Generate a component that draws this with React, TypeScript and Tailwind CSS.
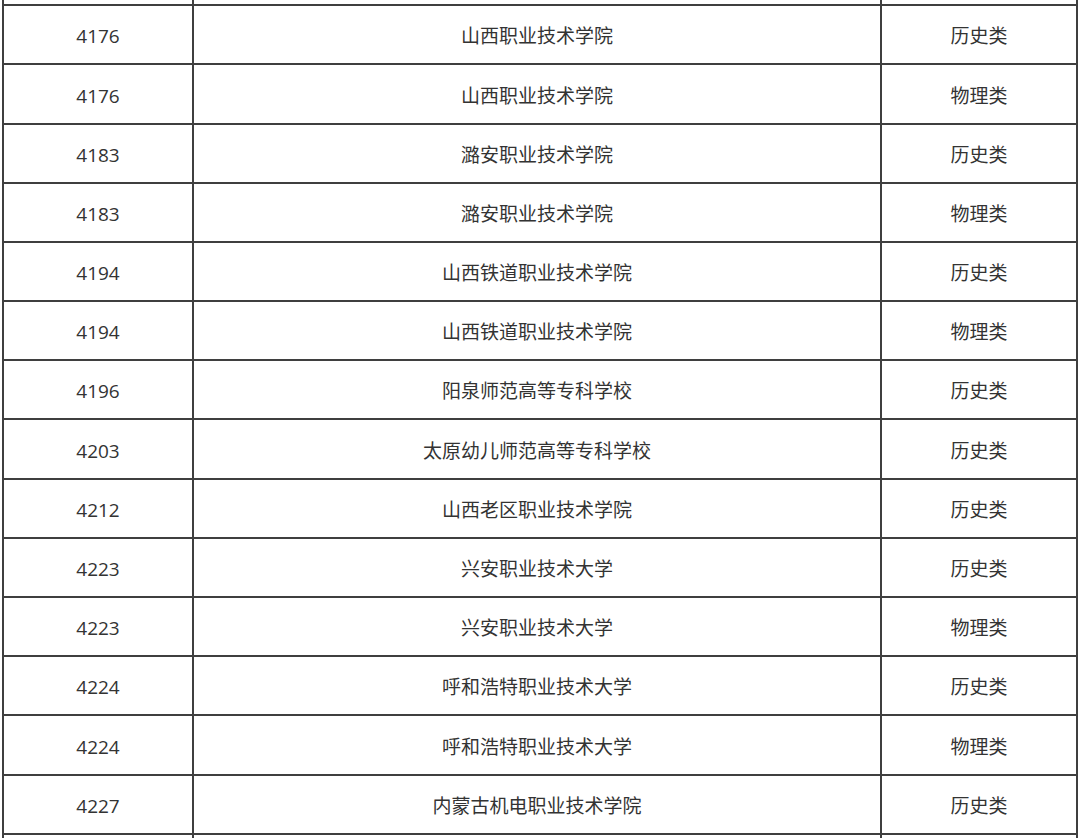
import React from "react";

const rows: [string, string, string][] = [
  ["4176", "山西职业技术学院", "历史类"],
  ["4176", "山西职业技术学院", "物理类"],
  ["4183", "潞安职业技术学院", "历史类"],
  ["4183", "潞安职业技术学院", "物理类"],
  ["4194", "山西铁道职业技术学院", "历史类"],
  ["4194", "山西铁道职业技术学院", "物理类"],
  ["4196", "阳泉师范高等专科学校", "历史类"],
  ["4203", "太原幼儿师范高等专科学校", "历史类"],
  ["4212", "山西老区职业技术学院", "历史类"],
  ["4223", "兴安职业技术大学", "历史类"],
  ["4223", "兴安职业技术大学", "物理类"],
  ["4224", "呼和浩特职业技术大学", "历史类"],
  ["4224", "呼和浩特职业技术大学", "物理类"],
  ["4227", "内蒙古机电职业技术学院", "历史类"],
];

// row heights so the lines land on the screenshot's pixel rows
const heights = [59, 60, 59, 59, 59, 59, 59, 60, 59, 59, 59, 59, 60, 59];

function Row({ cells, h, last }: { cells: string[]; h: number; last?: boolean }) {
  return (
    <div
      className={`grid grid-cols-[190px_688px_196px] ${last ? "" : "border-b-2"} border-[#3f3f3f]`}
      style={{ height: h }}
    >
      {cells.map((c, i) => (
        <div
          key={i}
          className="flex items-center justify-center border-r-2 border-[#3f3f3f] pt-1 text-[19px] text-[#333]"
        >
          {c}
        </div>
      ))}
    </div>
  );
}

export default function App() {
  return (
    <div
      className="h-[838px] w-[1080px] overflow-hidden bg-white"
      style={{ fontFamily: '"Open Sans", "Noto Sans CJK SC", sans-serif' }}
    >
      <div className="ml-[2px] w-[1076px] border-l-2 border-[#3f3f3f]">
        <Row cells={["", "", ""]} h={6} />
        {rows.map((r, i) => (
          <Row key={i} cells={r} h={heights[i]} />
        ))}
        <Row cells={["", "", ""]} h={10} last />
      </div>
    </div>
  );
}
